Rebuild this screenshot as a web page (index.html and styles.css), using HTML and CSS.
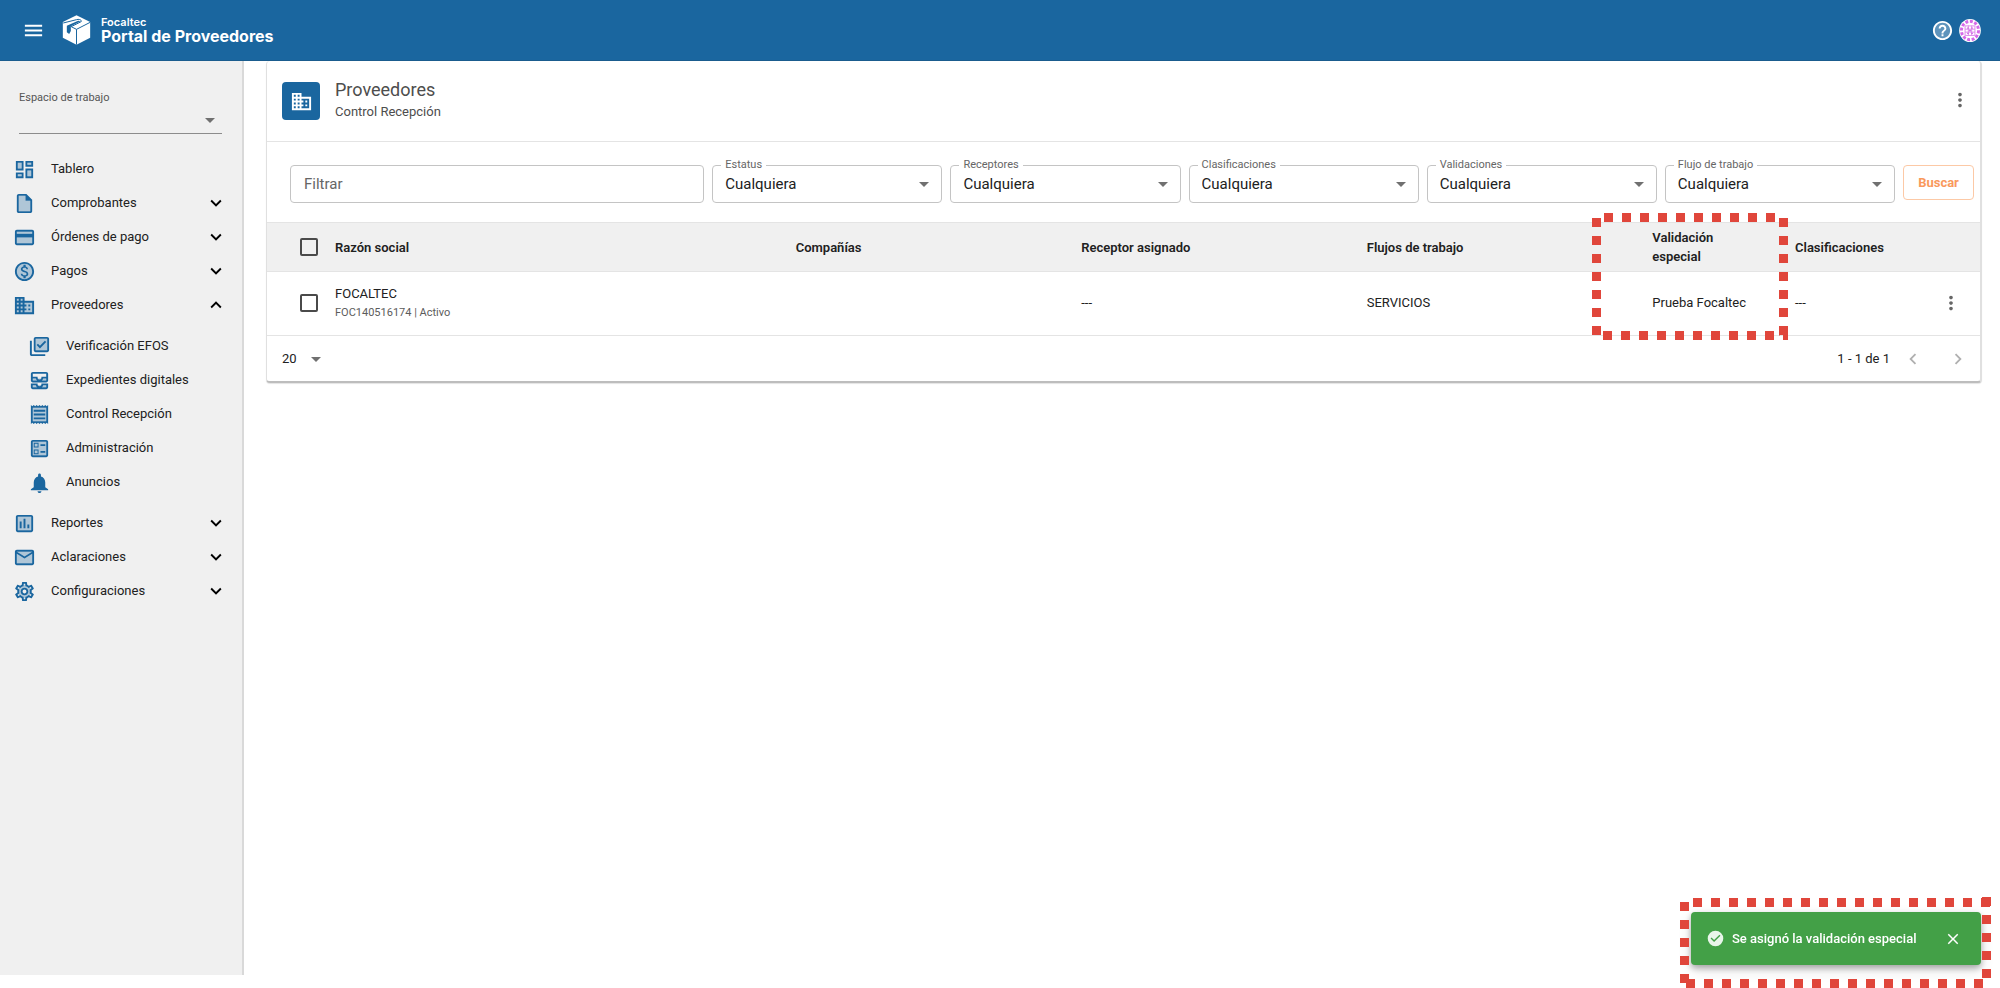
FILE: index.html
```html
<!DOCTYPE html>
<html lang="es">
<head>
<meta charset="utf-8">
<meta name="viewport" content="width=device-width, initial-scale=1">
<title>Portal de Proveedores</title>
<link rel="stylesheet" href="styles.css">
</head>
<body>
<svg class="defs" aria-hidden="true">
  <symbol id="chevron-down" viewBox="0 0 24 24"><path d="M16.59 8.59 12 13.17 7.41 8.59 6 10l6 6 6-6z"/></symbol>
  <symbol id="chevron-up" viewBox="0 0 24 24"><path d="m12 8-6 6 1.41 1.41L12 10.83l4.59 4.58L18 14z"/></symbol>
  <symbol id="caret" viewBox="0 0 10 5"><path d="M0 0h10L5 5z"/></symbol>
  <symbol id="more" viewBox="0 0 24 24"><path d="M12 8c1.1 0 2-.9 2-2s-.9-2-2-2-2 .9-2 2 .9 2 2 2zm0 2c-1.1 0-2 .9-2 2s.9 2 2 2 2-.9 2-2-.9-2-2-2zm0 6c-1.1 0-2 .9-2 2s.9 2 2 2 2-.9 2-2-.9-2-2-2z"/></symbol>
  <symbol id="business" viewBox="0 0 24 24"><path d="M12 7V3H2v18h20V7H12zM6 19H4v-2h2v2zm0-4H4v-2h2v2zm0-4H4V9h2v2zm0-4H4V5h2v2zm4 12H8v-2h2v2zm0-4H8v-2h2v2zm0-4H8V9h2v2zm0-4H8V5h2v2zm10 12h-8v-2h2v-2h-2v-2h2v-2h-2V9h8v10zm-2-8h-2v2h2v-2zm0 4h-2v2h2v-2z"/></symbol>
</svg>

<header class="topbar">
  <button class="icon-button" type="button" aria-label="Menú">
    <svg class="menu-icon" viewBox="0 0 24 24"><path d="M3 18h18v-2H3v2zm0-5h18v-2H3v2zm0-7v2h18V6H3z"/></svg>
  </button>
  <a class="brand" href="#">
    <svg class="brand-logo" viewBox="0 0 86 90" aria-hidden="true">
      <path fill="#fff" d="M43 1 84 21v47L43 89 2 68V21z"/>
      <path fill="none" stroke="#1a669f" stroke-width="3" d="M43 89V43L84 22M43 43 27 35 57 20c4-4-7-9-14-6L3 24"/>
      <path fill="#1a669f" d="M14 32 48 17l7 2-29 15v14l-5 9-7-5z"/>
    </svg>
    <span class="brand-text">
      <span class="brand-company">Focaltec</span>
      <span class="brand-name">Portal de Proveedores</span>
    </span>
  </a>
  <div class="topbar-actions">
    <button class="icon-button" type="button" aria-label="Ayuda">
      <svg class="help-icon" viewBox="0 0 24 24"><circle cx="12" cy="12" r="9" opacity=".3"/><path d="M11 18h2v-2h-2v2zm1-16C6.48 2 2 6.48 2 12s4.48 10 10 10 10-4.48 10-10S17.52 2 12 2zm0 18c-4.41 0-8-3.59-8-8s3.59-8 8-8 8 3.59 8 8-3.59 8-8 8zm0-14c-2.21 0-4 1.79-4 4h2c0-1.1.9-2 2-2s2 .9 2 2c0 2-3 1.75-3 5h2c0-2.25 3-2.5 3-5 0-2.21-1.79-4-4-4z"/></svg>
    </button>
    <button class="icon-button" type="button" aria-label="Cuenta">
      <svg class="avatar" viewBox="0 0 66 70">
        <ellipse cx="33" cy="35" rx="33" ry="35" fill="#fff"/>
        <ellipse cx="33" cy="35" rx="26" ry="28" fill="none" stroke="#d569e8" stroke-width="9" stroke-dasharray="9 5"/>
        <path fill="none" stroke="#dd8aec" stroke-width="3" d="M18 21h30v29H18zM18 31h30M18 40h30M28 20v30M38 20v30"/>
        <path fill="#cf78e4" d="M24 26h6v4h-6zM36 26h6v4h-6zM24 42h6v4h-6zM36 42h6v4h-6zM30 33h6v5h-6z"/>
      </svg>
    </button>
  </div>
</header>

<div class="layout">
  <aside class="sidebar">
    <div class="workspace">
      <label class="workspace-label" for="workspace">Espacio de trabajo</label>
      <div class="select-wrap">
        <select class="workspace-select" id="workspace"><option></option></select>
        <svg class="caret"><use href="#caret"/></svg>
      </div>
    </div>
    <nav class="nav" aria-label="Principal">
      <ul class="nav-list">
        <li><a class="nav-item" href="#"><svg class="nav-icon" viewBox="0 0 24 24"><path opacity=".3" d="M5 5h4v6H5zm10 8h4v6h-4zM5 17h4v2H5zM15 5h4v2h-4z"/><path d="M3 13h8V3H3v10zm2-8h4v6H5V5zm8 16h8V11h-8v10zm2-8h4v6h-4v-6zM13 3v6h8V3h-8zm6 4h-4V5h4v2zM3 21h8v-6H3v6zm2-4h4v2H5v-2z"/></svg><span>Tablero</span></a></li>
        <li><a class="nav-item" href="#"><svg class="nav-icon" viewBox="0 0 24 24"><path opacity=".3" d="M13 4H6v16h12V9h-5z"/><path d="M20 8l-6-6H6c-1.1 0-1.99.9-1.99 2L4 20c0 1.1.89 2 1.99 2H18c1.1 0 2-.9 2-2V8zm-2 12H6V4h7v5h5v11z"/></svg><span>Comprobantes</span><svg class="nav-chevron"><use href="#chevron-down"/></svg></a></li>
        <li><a class="nav-item" href="#"><svg class="nav-icon" viewBox="0 0 24 24"><path opacity=".3" d="M4 12h16v6H4zm0-6h16v2H4z"/><path d="M20 4H4c-1.11 0-1.99.89-1.99 2L2 18c0 1.11.89 2 2 2h16c1.11 0 2-.89 2-2V6c0-1.11-.89-2-2-2zm0 14H4v-6h16v6zm0-10H4V6h16v2z"/></svg><span>Órdenes de pago</span><svg class="nav-chevron"><use href="#chevron-down"/></svg></a></li>
        <li><a class="nav-item" href="#"><svg class="nav-icon" viewBox="0 0 24 24"><circle cx="12" cy="12" r="9" opacity=".3"/><path d="M12 2C6.48 2 2 6.48 2 12s4.48 10 10 10 10-4.48 10-10S17.52 2 12 2zm0 18c-4.41 0-8-3.59-8-8s3.59-8 8-8 8 3.59 8 8-3.59 8-8 8zm.31-8.86c-1.77-.45-2.34-.94-2.34-1.67 0-.84.79-1.43 2.1-1.43 1.38 0 1.9.66 1.94 1.64h1.71c-.05-1.34-.87-2.57-2.49-2.97V5H10.9v1.69c-1.51.32-2.72 1.3-2.72 2.81 0 1.79 1.49 2.69 3.66 3.21 1.95.46 2.34 1.15 2.34 1.87 0 .53-.39 1.39-2.1 1.39-1.6 0-2.23-.72-2.32-1.64H8.04c.1 1.7 1.36 2.66 2.86 2.97V19h2.34v-1.67c1.52-.29 2.72-1.16 2.73-2.77-.01-2.2-1.9-2.96-3.66-3.42z"/></svg><span>Pagos</span><svg class="nav-chevron"><use href="#chevron-down"/></svg></a></li>
        <li>
          <a class="nav-item" href="#" aria-expanded="true"><svg class="nav-icon" viewBox="0 0 24 24"><path opacity=".3" d="M3 4h9v4h9v12H3z"/><use href="#business"/></svg><span>Proveedores</span><svg class="nav-chevron"><use href="#chevron-up"/></svg></a>
          <ul class="nav-list nav-sub">
            <li><a class="nav-item" href="#"><svg class="nav-icon" viewBox="0 0 24 24"><path opacity=".3" d="M8 4h12v12H8z"/><path d="M20 2H8c-1.1 0-2 .9-2 2v12c0 1.1.9 2 2 2h12c1.1 0 2-.9 2-2V4c0-1.1-.9-2-2-2zm0 14H8V4h12v12zm-7.53-2L9 10.5l1.4-1.41 2.07 2.08L17.6 6 19 7.41 12.47 14zM4 6H2v14c0 1.1.9 2 2 2h14v-2H4V6z"/></svg><span>Verificación EFOS</span></a></li>
            <li><a class="nav-item" href="#"><svg class="nav-icon" viewBox="0 0 24 24"><path opacity=".3" d="M5 10h14v2H5zm0 7h14v2H5z"/><path d="M19 3H5c-1.1 0-2 .9-2 2v7c0 1.1.9 2 2 2h14c1.1 0 2-.9 2-2V5c0-1.1-.9-2-2-2zM5 10h3.13c.21.78.67 1.47 1.27 2H5v-2zm14 2h-4.4c.6-.53 1.06-1.22 1.27-2H19v2zm0-4h-5v1c0 1.07-.93 2-2 2s-2-.93-2-2V8H5V5h14v3zm-5 7v1c0 .47-.19.9-.48 1.25-.37.45-.92.75-1.52.75s-1.15-.3-1.52-.75c-.29-.35-.48-.78-.48-1.25v-1H3v4c0 1.1.9 2 2 2h14c1.1 0 2-.9 2-2v-4h-7zm-9 2h3.13c.02.09.06.17.09.25.24.68.65 1.28 1.18 1.75H5v-2zm14 2h-4.4c.54-.47.95-1.07 1.18-1.75.03-.08.07-.17.09-.25H19v2z"/></svg><span>Expedientes digitales</span></a></li>
            <li><a class="nav-item" href="#"><svg class="nav-icon" viewBox="0 0 24 24"><path opacity=".3" d="M5 5h14v14H5z"/><path d="M19.5 3.5L18 2l-1.5 1.5L15 2l-1.5 1.5L12 2l-1.5 1.5L9 2 7.5 3.5 6 2 4.5 3.5 3 2v20l1.5-1.5L6 22l1.5-1.5L9 22l1.5-1.5L12 22l1.5-1.5L15 22l1.5-1.5L18 22l1.5-1.5L21 22V2l-1.5 1.5zM19 19.09H5V4.91h14v14.18zM6 15h12v2H6zm0-4h12v2H6zm0-4h12v2H6z"/></svg><span>Control Recepción</span></a></li>
            <li><a class="nav-item" href="#"><svg class="nav-icon" viewBox="0 0 24 24"><path opacity=".3" d="M5 5h14v14H5z"/><path d="M13 7.5h5v2h-5zm0 7h5v2h-5zM19 3H5c-1.1 0-2 .9-2 2v14c0 1.1.9 2 2 2h14c1.1 0 2-.9 2-2V5c0-1.1-.9-2-2-2zm0 16H5V5h14v14zM11 6H6v5h5V6zm-1 4H7V7h3v3zm1 3H6v5h5v-5zm-1 4H7v-3h3v3z"/></svg><span>Administración</span></a></li>
            <li><a class="nav-item" href="#"><svg class="nav-icon" viewBox="0 0 24 24"><path d="M12 23c1.1 0 2-.9 2-2h-4c0 1.1.89 2 2 2zm6-6v-5c0-3.07-1.64-5.64-4.5-6.32V4c0-.83-.67-1.5-1.5-1.5s-1.5.67-1.5 1.5v1.68C7.63 6.36 6 8.92 6 12v5l-3 2v1h18v-1z"/></svg><span>Anuncios</span></a></li>
          </ul>
        </li>
        <li><a class="nav-item" href="#"><svg class="nav-icon" viewBox="0 0 24 24"><path opacity=".3" d="M5 5h14v14H5z"/><path d="M19 3H5c-1.1 0-2 .9-2 2v14c0 1.1.9 2 2 2h14c1.1 0 2-.9 2-2V5c0-1.1-.9-2-2-2zm0 16H5V5h14v14zM7 10h2v7H7zm4-3h2v10h-2zm4 6h2v4h-2z"/></svg><span>Reportes</span><svg class="nav-chevron"><use href="#chevron-down"/></svg></a></li>
        <li><a class="nav-item" href="#"><svg class="nav-icon" viewBox="0 0 24 24"><path opacity=".3" d="M4 6h16v12H4z"/><path d="M22 6c0-1.1-.9-2-2-2H4c-1.1 0-2 .9-2 2v12c0 1.1.9 2 2 2h16c1.1 0 2-.9 2-2V6zm-2 0l-8 4.99L4 6h16zm0 12H4V8l8 5 8-5v10z"/></svg><span>Aclaraciones</span><svg class="nav-chevron"><use href="#chevron-down"/></svg></a></li>
        <li><a class="nav-item" href="#"><svg class="nav-icon" viewBox="0 0 24 24"><circle cx="12" cy="12" r="5" fill="none" stroke="#1a669f" stroke-width="4" opacity=".3"/><path d="M19.43 12.98c.04-.32.07-.64.07-.98 0-.34-.03-.66-.07-.98l2.11-1.65c.19-.15.24-.42.12-.64l-2-3.46c-.09-.16-.26-.25-.44-.25-.06 0-.12.01-.17.03l-2.49 1c-.52-.4-1.08-.73-1.69-.98l-.38-2.65C14.46 2.18 14.25 2 14 2h-4c-.25 0-.46.18-.49.42l-.38 2.65c-.61.25-1.17.59-1.69.98l-2.49-1c-.06-.02-.12-.03-.18-.03-.17 0-.34.09-.43.25l-2 3.46c-.13.22-.07.49.12.64l2.11 1.65c-.04.32-.07.65-.07.98 0 .33.03.66.07.98l-2.11 1.65c-.19.15-.24.42-.12.64l2 3.46c.09.16.26.25.44.25.06 0 .12-.01.17-.03l2.49-1c.52.4 1.08.73 1.69.98l.38 2.65c.03.24.24.42.49.42h4c.25 0 .46-.18.49-.42l.38-2.65c.61-.25 1.17-.59 1.69-.98l2.49 1c.06.02.12.03.18.03.17 0 .34-.09.43-.25l2-3.46c.12-.22.07-.49-.12-.64l-2.11-1.65zm-1.98-1.71c.04.31.05.52.05.73 0 .21-.02.43-.05.73l-.14 1.13.89.7 1.08.84-.7 1.21-1.27-.51-1.04-.42-.9.68c-.43.32-.84.56-1.25.73l-1.06.43-.16 1.13-.2 1.35h-1.4l-.19-1.35-.16-1.13-1.06-.43c-.43-.18-.83-.41-1.23-.71l-.91-.7-1.06.43-1.27.51-.7-1.21 1.08-.84.89-.7-.14-1.13c-.03-.31-.05-.54-.05-.74s.02-.43.05-.73l.14-1.13-.89-.7-1.08-.84.7-1.21 1.27.51 1.04.42.9-.68c.43-.32.84-.56 1.25-.73l1.06-.43.16-1.13.2-1.35h1.39l.19 1.35.16 1.13 1.06.43c.43.18.83.41 1.23.71l.91.7 1.06-.43 1.27-.51.7 1.21-1.07.85-.89.7.14 1.13zM12 8c-2.21 0-4 1.79-4 4s1.79 4 4 4 4-1.79 4-4-1.79-4-4-4zm0 6c-1.1 0-2-.9-2-2s.9-2 2-2 2 .9 2 2-.9 2-2 2z"/></svg><span>Configuraciones</span><svg class="nav-chevron"><use href="#chevron-down"/></svg></a></li>
      </ul>
    </nav>
  </aside>

  <main class="content">
    <section class="card">
      <div class="card-header">
        <div class="card-badge"><svg viewBox="0 0 24 24"><use href="#business"/></svg></div>
        <div class="card-titles">
          <h1 class="card-title">Proveedores</h1>
          <p class="card-subtitle">Control Recepción</p>
        </div>
        <button class="icon-button more-button" type="button" aria-label="Más opciones"><svg><use href="#more"/></svg></button>
      </div>

      <form class="filters">
        <input class="field-control" type="text" placeholder="Filtrar" aria-label="Filtrar">
        <div class="field select-wrap">
          <label class="field-label" for="estatus">Estatus</label>
          <select class="field-control field-select" id="estatus"><option>Cualquiera</option></select>
          <svg class="caret"><use href="#caret"/></svg>
        </div>
        <div class="field select-wrap">
          <label class="field-label" for="receptores">Receptores</label>
          <select class="field-control field-select" id="receptores"><option>Cualquiera</option></select>
          <svg class="caret"><use href="#caret"/></svg>
        </div>
        <div class="field select-wrap">
          <label class="field-label" for="clasificaciones">Clasificaciones</label>
          <select class="field-control field-select" id="clasificaciones"><option>Cualquiera</option></select>
          <svg class="caret"><use href="#caret"/></svg>
        </div>
        <div class="field select-wrap">
          <label class="field-label" for="validaciones">Validaciones</label>
          <select class="field-control field-select" id="validaciones"><option>Cualquiera</option></select>
          <svg class="caret"><use href="#caret"/></svg>
        </div>
        <div class="field select-wrap">
          <label class="field-label" for="flujo">Flujo de trabajo</label>
          <select class="field-control field-select" id="flujo"><option>Cualquiera</option></select>
          <svg class="caret"><use href="#caret"/></svg>
        </div>
        <button class="search-button" type="button">Buscar</button>
      </form>

      <div class="table-area">
        <table class="table">
          <colgroup>
            <col class="col-check"><col><col class="col-wide"><col class="col-wide"><col class="col-wide"><col class="col-narrow"><col class="col-class"><col class="col-menu">
          </colgroup>
          <thead>
            <tr>
              <th class="check-cell"><input class="checkbox" type="checkbox" aria-label="Seleccionar todos"></th>
              <th scope="col">Razón social</th>
              <th scope="col">Compañías</th>
              <th scope="col">Receptor asignado</th>
              <th scope="col">Flujos de trabajo</th>
              <th scope="col" class="wrap-cell">Validación especial</th>
              <th scope="col">Clasificaciones</th>
              <th></th>
            </tr>
          </thead>
          <tbody>
            <tr>
              <td class="check-cell"><input class="checkbox" type="checkbox" aria-label="Seleccionar FOCALTEC"></td>
              <td><div>FOCALTEC</div><div class="cell-detail">FOC140516174 | Activo</div></td>
              <td></td>
              <td>---</td>
              <td>SERVICIOS</td>
              <td>Prueba Focaltec</td>
              <td>---</td>
              <td class="menu-cell"><button class="icon-button more-button" type="button" aria-label="Acciones"><svg><use href="#more"/></svg></button></td>
            </tr>
          </tbody>
        </table>
        <svg class="highlight highlight-column" width="196" height="127" viewBox="0 0 196 127" aria-hidden="true">
          <path d="M12 4.500H192M4.500 5V123M191.500 5V123M11 122.500H184"/>
          <path class="highlight-corner" d="M187 122l5-4h4v9h-5v-8l-4 4z"/>
        </svg>
      </div>

      <div class="pagination">
        <div class="select-wrap page-size">
          <select class="page-select" aria-label="Filas por página"><option>20</option></select>
          <svg class="caret"><use href="#caret"/></svg>
        </div>
        <span class="page-range">1 - 1 de 1</span>
        <button class="icon-button page-button" type="button" aria-label="Anterior" disabled><svg viewBox="0 0 24 24"><path d="M15.41 7.41 14 6l-6 6 6 6 1.41-1.41L10.83 12z"/></svg></button>
        <button class="icon-button page-button" type="button" aria-label="Siguiente" disabled><svg viewBox="0 0 24 24"><path d="M10 6 8.590 7.410 13.170 12l-4.580 4.590L10 18l6-6z"/></svg></button>
      </div>
    </section>
  </main>
</div>

<div class="toast" role="status">
  <svg class="toast-icon" viewBox="0 0 24 24"><path d="M12 1a11 11 0 1 0 0 22 11 11 0 0 0 0-22zm-2 16l-5-5 1.410-1.410L10 14.170l7.590-7.590L19 8l-9 9z"/></svg>
  <span class="toast-text">Se asignó la validación especial</span>
  <button class="icon-button toast-close" type="button" aria-label="Cerrar"><svg viewBox="0 0 24 24"><path d="M19 6.410 17.590 5 12 10.590 6.410 5 5 6.410 10.590 12 5 17.590 6.410 19 12 13.410 17.590 19 19 17.590 13.410 12z"/></svg></button>
  <svg class="highlight highlight-toast" width="311" height="90" viewBox="0 0 311 90" aria-hidden="true">
    <path d="M13 4.500H311M4.500 4V86M306.500 -1V82M6 85.500H303"/>
  </svg>
</div>
</body>
</html>
```
FILE: styles.css
```css
* {
  box-sizing: border-box;
}

body {
  display: flex;
  flex-direction: column;
  min-height: 100vh;
  margin: 0;
  padding-bottom: 13px;
  background: #fff;
  color: #212121;
  font: 13px/20px Roboto, "Liberation Sans", sans-serif;
}

.defs {
  position: absolute;
  width: 0;
  height: 0;
}

.icon-button {
  display: flex;
  padding: 0;
  border: 0;
  background: none;
  color: inherit;
  fill: currentColor;
}

/* Top bar */
.topbar {
  display: flex;
  align-items: center;
  height: 61px;
  padding: 0 19px 0 22px;
  border-bottom: 1px solid #1a5c8e;
  background: #1a669f;
  color: #fff;
}

.menu-icon {
  width: 23px;
  height: 23px;
}

.brand {
  display: flex;
  align-items: center;
  gap: 10px;
  margin-left: 17px;
  color: inherit;
  font-family: Inter, "Open Sans", sans-serif;
  text-decoration: none;
}

.brand-logo {
  width: 29px;
  height: 30px;
}

.brand-text {
  display: flex;
  flex-direction: column;
}

.brand-company {
  font-size: 11px;
  font-weight: 600;
  line-height: 12px;
}

.brand-name {
  font-size: 16px;
  font-weight: 700;
  line-height: 16px;
}

.topbar-actions {
  display: flex;
  align-items: center;
  gap: 5px;
  margin-left: auto;
}

.help-icon {
  width: 23px;
  height: 23px;
}

.avatar {
  width: 22px;
  height: 23px;
}

/* Shell */
.layout {
  display: flex;
  flex: 1;
}

.sidebar {
  flex: none;
  width: 244px;
  padding-top: 29px;
  border-right: 2px solid #d9d9d9;
  background: #f0f0f0;
}

.content {
  flex: 1;
  min-width: 0;
  padding: 0 18px 0 22px;
}

/* Selects share one caret */
.select-wrap {
  position: relative;
}

.select-wrap select {
  appearance: none;
  outline: 0;
  color: inherit;
  font-family: inherit;
}

.caret {
  position: absolute;
  top: 50%;
  right: 13px;
  width: 10px;
  height: 5px;
  margin-top: -2px;
  fill: #707070;
  pointer-events: none;
}

.workspace {
  margin: 0 20px 17px 19px;
  color: #555;
}

.workspace-label {
  display: block;
  font-size: 11px;
  line-height: 16px;
}

.workspace-select {
  display: block;
  width: 100%;
  height: 28px;
  border: 0;
  border-bottom: 1px solid #8c8c8c;
  border-radius: 0;
  background: transparent;
}

.workspace .caret {
  right: 7px;
}

.nav {
  padding-top: 1px;
}

.nav-list {
  margin: 0;
  padding: 0;
  list-style: none;
}

.nav-item {
  display: flex;
  align-items: center;
  gap: 15px;
  height: 34px;
  padding: 0 15px 0 13px;
  color: #212121;
  text-decoration: none;
}

.nav-icon {
  width: 23px;
  height: 23px;
  fill: #1a669f;
}

.nav-chevron {
  width: 22px;
  height: 22px;
  margin-left: auto;
}

.nav-sub {
  padding: 7px 0;
}

.nav-sub .nav-item {
  padding-left: 28px;
}

/* Card */
.card {
  border: 1px solid #e0e0e0;
  border-width: 0 2px 2px 1px;
  border-bottom-color: #bdbdbd;
  border-radius: 4px;
  background: #fff;
  box-shadow: 0 1px 1px #e4e4e4;
}

.card-header {
  display: flex;
  align-items: center;
  gap: 15px;
  height: 81px;
  padding: 0 9px 0 15px;
  border-bottom: 1px solid #e4e4e4;
}

.card-badge {
  display: flex;
  align-items: center;
  justify-content: center;
  width: 38px;
  height: 38px;
  border-radius: 4px;
  background: #1a669f;
  fill: #fff;
}

.card-badge svg {
  width: 23px;
  height: 23px;
}

.card-titles {
  flex: 1;
  padding-bottom: 2px;
  color: #4d4d4d;
}

.card-title {
  margin: 0;
  font-size: 18px;
  font-weight: 400;
  line-height: 24px;
}

.card-subtitle {
  margin: 0;
}

.more-button {
  color: #666;
}

.more-button svg {
  width: 22px;
  height: 22px;
}

.card-header .more-button {
  padding-bottom: 3px;
}

/* Filters */
.filters {
  display: grid;
  grid-template-columns: minmax(0, 9fr) repeat(5, minmax(0, 5fr)) 71px;
  gap: 8px;
  align-items: start;
  padding: 23px 6px 19px 23px;
}

.field-control {
  display: block;
  width: 100%;
  height: 38px;
  padding: 0 13px;
  border: 1px solid #c4c4c4;
  border-radius: 4px;
  background: #fff;
  font: 15px/20px Roboto, "Liberation Sans", sans-serif;
}

.field-control::placeholder {
  color: #666;
  opacity: 1;
}

.field-select {
  padding: 0 12px;
}

.field-label {
  position: absolute;
  top: -7px;
  left: 9px;
  padding: 0 4px;
  background: #fff;
  color: #666;
  font-size: 11px;
  line-height: 14px;
}

.search-button {
  height: 35px;
  padding: 0;
  border: 1px solid #fcc9a6;
  border-radius: 4px;
  background: #fff;
  color: #f9995c;
  font: 700 13px/20px Roboto, "Liberation Sans", sans-serif;
}

/* Table */
.table-area {
  position: relative;
}

.table {
  width: 100%;
  border-collapse: collapse;
  table-layout: fixed;
}

.col-check {
  width: 68px;
}

.col-wide {
  width: 16.67%;
}

.col-narrow {
  width: 8.33%;
}

.col-class {
  width: 122px;
}

.col-menu {
  width: 63px;
}

.table th,
.table td {
  padding: 0;
  text-align: left;
}

.table th {
  height: 49px;
  border: solid #e4e4e4;
  border-width: 1px 0;
  background: #f0f0f0;
  font-weight: 600;
  line-height: 19px;
}

.table .wrap-cell {
  padding-right: 48px;
}

.table td {
  height: 64px;
  padding-bottom: 2px;
  border-bottom: 1px solid #e4e4e4;
}

.table .check-cell {
  padding-left: 33px;
}

.checkbox {
  display: block;
  width: 18px;
  height: 18px;
  margin: 0;
  border: 2px solid #4a4a4a;
  border-radius: 2px;
  appearance: none;
}

.cell-detail {
  color: #5c5c5c;
  font-size: 11px;
  line-height: 18px;
}

.table .menu-cell {
  padding-left: 23px;
}

/* Pagination */
.pagination {
  display: flex;
  align-items: center;
  height: 45px;
  padding: 0 11px 0 15px;
}

.page-size {
  width: 52px;
  margin-right: auto;
}

.page-select {
  width: 100%;
  height: 24px;
  padding: 0;
  border: 0;
  background: transparent;
  font-size: 13px;
}

.page-range {
  margin-right: 12px;
}

.page-button {
  color: #b0b0b0;
}

.page-button + .page-button {
  margin-left: 23px;
}

.page-button svg {
  width: 22px;
  height: 22px;
}

/* Toast */
.toast {
  position: fixed;
  right: 19px;
  bottom: 23px;
  display: flex;
  align-items: center;
  width: 290px;
  height: 53px;
  padding: 0 19px 0 16px;
  border-radius: 4px;
  background: #43a047;
  box-shadow: 0 3px 6px rgba(0, 0, 0, .3), 0 5px 14px rgba(0, 0, 0, .12);
  color: #fff;
}

.toast-icon {
  width: 17px;
  height: 17px;
  fill: #e9f5ea;
}

.toast-text {
  margin-left: 8px;
  font-weight: 500;
  white-space: nowrap;
}

.toast-close {
  margin-left: auto;
}

.toast-close svg {
  width: 18px;
  height: 18px;
}

/* Dashed callout frames */
.highlight {
  position: absolute;
  overflow: visible;
  fill: none;
  stroke: #e0463b;
  stroke-width: 9;
  stroke-dasharray: 9 9;
  pointer-events: none;
}

.highlight-corner {
  fill: #e0463b;
  stroke: none;
}

.highlight-column {
  top: -9px;
  right: 192px;
}

.highlight-toast {
  top: -14px;
  right: -10px;
}
```
